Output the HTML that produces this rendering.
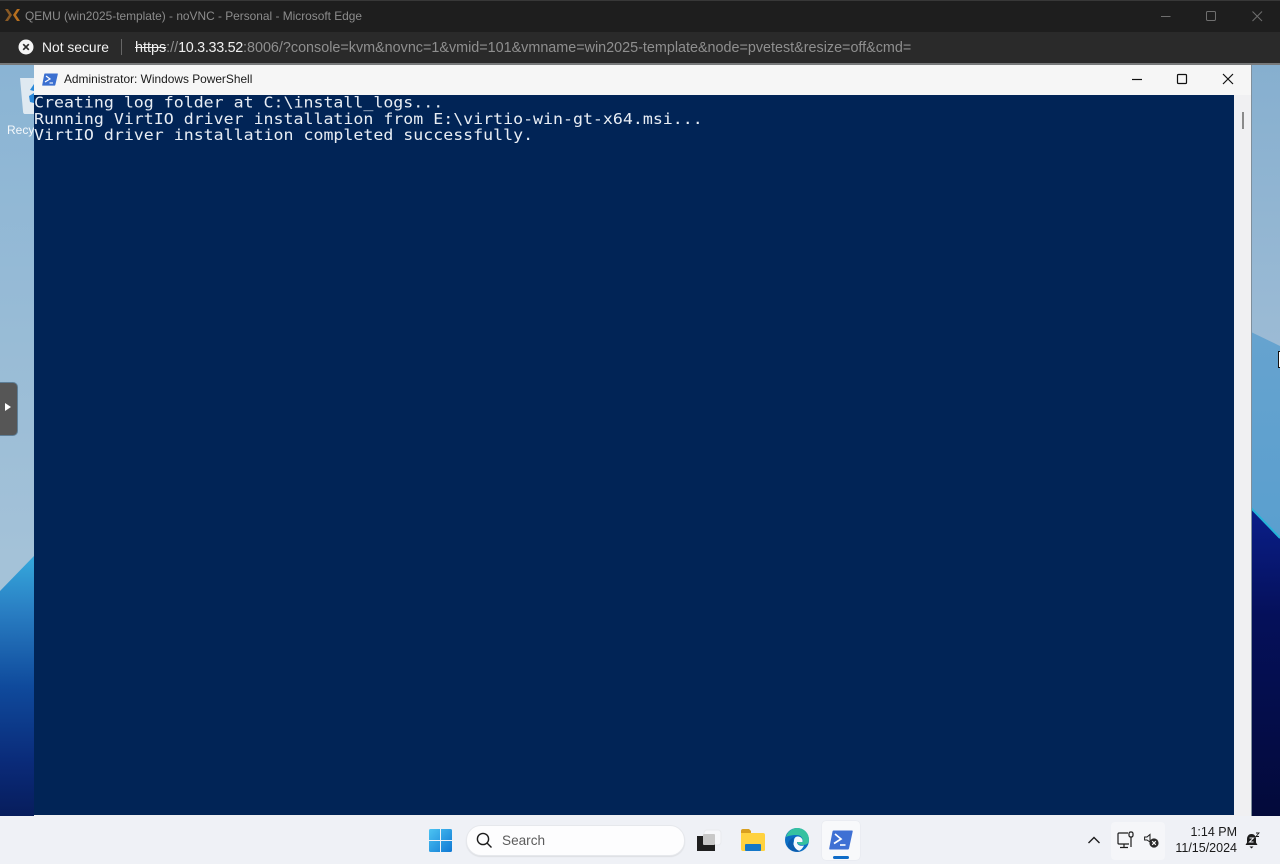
<!DOCTYPE html>
<html lang="en">
<head>
<meta charset="utf-8">
<title>QEMU (win2025-template) - noVNC - Personal - Microsoft Edge</title>
<style>
html,body{margin:0;padding:0;width:1280px;height:864px;overflow:hidden;background:#8fb5d2}
body{position:relative;font-family:"Liberation Sans",sans-serif}
.a{position:absolute;white-space:pre}
svg{position:absolute;display:block}
</style>
</head>
<body>

<!-- wallpaper -->
<svg style="left:0;top:64px" width="1280" height="752" viewBox="0 64 1280 752">
<defs>
<linearGradient id="wl" x1="0" y1="557" x2="0" y2="816" gradientUnits="userSpaceOnUse">
<stop offset="0" stop-color="#35a8dc"/><stop offset=".2" stop-color="#2a80c4"/><stop offset=".5" stop-color="#0f4a9c"/><stop offset=".8" stop-color="#0a2a78"/><stop offset="1" stop-color="#071d5c"/>
</linearGradient>
<linearGradient id="wt" x1="0" y1="64" x2="0" y2="560" gradientUnits="userSpaceOnUse">
<stop offset="0" stop-color="#8ab4d4"/><stop offset="1" stop-color="#a4c2d8"/>
</linearGradient>
<linearGradient id="wtr" x1="0" y1="64" x2="0" y2="350" gradientUnits="userSpaceOnUse">
<stop offset="0" stop-color="#86afcf"/><stop offset="1" stop-color="#9cbbd5"/>
</linearGradient>
<linearGradient id="wr" x1="0" y1="332" x2="0" y2="540" gradientUnits="userSpaceOnUse">
<stop offset="0" stop-color="#66a3cf"/><stop offset="1" stop-color="#5a9fcf"/>
</linearGradient>
<linearGradient id="wd" x1="0" y1="508" x2="0" y2="816" gradientUnits="userSpaceOnUse">
<stop offset="0" stop-color="#0a1f8a"/><stop offset=".35" stop-color="#05105a"/><stop offset="1" stop-color="#030a3a"/>
</linearGradient>
</defs>
<rect x="0" y="64" width="1280" height="752" fill="url(#wt)"/>
<path d="M0 591 L34 556 V816 H0 Z" fill="url(#wl)"/>
<rect x="1251" y="64" width="29" height="290" fill="url(#wtr)"/>
<path d="M1251 332 L1280 346 V540 L1251 508 Z" fill="url(#wr)"/>
<path d="M1251 508 L1280 538 V816 H1251 Z" fill="url(#wd)"/>
<path d="M1251 508 L1280 538" stroke="#25b4d8" stroke-width="2" fill="none"/>
</svg>

<!-- recycle bin peek -->
<svg style="left:18px;top:76px" width="16" height="40" viewBox="0 0 16 40">
<path d="M2 2 H16 V38 H7 Q5 38 5 35 Z" fill="#dfe9f1"/>
<path d="M16 8 L12 14 L16 15 Z M16 17 L11 20 L12 26 L16 27 Z" fill="#2b88d8"/>
</svg>
<div class="a" style="left:7px;top:123px;font-size:12px;line-height:14px;color:#f4f8fb;width:27px;overflow:hidden">Recycle</div>

<!-- Edge title bar -->
<div class="a" style="left:0;top:0;width:1280px;height:32px;background:#1e1e1e"></div>
<div class="a" style="left:0;top:0;width:1280px;height:1px;background:#383838"></div>
<svg style="left:4px;top:8px" width="17" height="14" viewBox="0 0 17 14">
<path d="M1 1 H4 L8 7 L4 13 H1 L5 7 Z" fill="#8a5a25"/>
<path d="M16 1 H13 L9 7 L13 13 H16 L12 7 Z" fill="#b8701f"/>
</svg>
<div class="a" style="left:25px;top:8px;font-size:11.9px;line-height:16px;color:#8c8c8c">QEMU (win2025-template) - noVNC - Personal - Microsoft Edge</div>
<svg style="left:1150px;top:6px" width="125" height="20" viewBox="0 0 125 20" fill="none" stroke="#6f6f6f" stroke-width="1">
<path d="M11 10.5 H20.5"/>
<rect x="56.5" y="5.5" width="9" height="9" rx="1.2"/>
<path d="M102.5 5.5 L112 15 M112 5.5 L102.5 15"/>
</svg>

<!-- Edge address bar -->
<div class="a" style="left:0;top:32px;width:1280px;height:32px;background:#2a2a2a"></div>
<div class="a" style="left:0;top:63px;width:1280px;height:2px;background:#77797a"></div>
<svg style="left:18px;top:39px" width="16" height="16" viewBox="0 0 16 16">
<circle cx="8" cy="8" r="7.5" fill="#f5f5f5"/>
<path d="M5.2 5.2 L10.8 10.8 M10.8 5.2 L5.2 10.8" stroke="#2a2a2a" stroke-width="1.7"/>
</svg>
<div class="a" style="left:42px;top:39px;font-size:13.85px;line-height:17px;color:#f2f2f2">Not secure</div>
<div class="a" style="left:121px;top:39px;width:1px;height:16px;background:#666"></div>
<div class="a" style="left:135px;top:40px;font-size:14.37px;line-height:16px;color:#8f8f8f"><span style="color:#efefef;text-decoration:line-through">https</span>://<span style="color:#efefef;letter-spacing:-.3px">10.3.33.52</span>:8006/?console=kvm&amp;novnc=1&amp;vmid=101&amp;vmname=win2025-template&amp;node=pvetest&amp;resize=off&amp;cmd=</div>

<!-- PowerShell window -->
<div class="a" style="left:34px;top:65px;width:1217px;height:751px;background:#f0f0f2"></div>
<div class="a" style="left:1251px;top:65px;width:1px;height:751px;background:#7f8f9c"></div>
<div class="a" style="left:34px;top:65px;width:1217px;height:30px;background:#f6f6f6"></div>
<svg style="left:42px;top:73px" width="16" height="13" viewBox="0 0 16 13">
<path d="M3 0.5 H15.5 Q16 0.5 15.8 1.2 L13.3 12 Q13.1 12.6 12.5 12.6 H0.7 Q0 12.6 0.2 12 L2.3 1 Q2.4 0.5 3 0.5 Z" fill="#3b6fd0"/>
<path d="M4 3 L8 6 L3 9" stroke="#fff" stroke-width="1.2" fill="none"/>
<path d="M7.5 10 H11" stroke="#fff" stroke-width="1.1"/>
</svg>
<div class="a" style="left:64px;top:72px;font-size:11.9px;line-height:15px;color:#1a1a1a">Administrator: Windows PowerShell</div>
<svg style="left:1125px;top:70px" width="115" height="18" viewBox="0 0 115 18" fill="none" stroke="#111" stroke-width="1.2">
<path d="M7 9.5 H17"/>
<rect x="52.5" y="4.5" width="9" height="9" rx="1"/>
<path d="M98 4 L108 14 M108 4 L98 14"/>
</svg>
<div class="a" style="left:34px;top:95px;width:1200px;height:720px;background:#012456"></div>
<div class="a" style="left:34px;top:95px;font-family:'DejaVu Sans Mono','Liberation Mono',monospace;font-size:16.58px;line-height:17.78px;color:#e8edf4;transform:scaleY(.9);transform-origin:0 0">Creating log folder at C:\install_logs...
Running VirtIO driver installation from E:\virtio-win-gt-x64.msi...
VirtIO driver installation completed successfully.</div>
<div class="a" style="left:1242px;top:112px;width:2px;height:17px;background:#8a8a8a"></div>

<!-- noVNC control handle -->
<div class="a" style="left:0;top:382px;width:17px;height:52px;background:#565656;border-radius:0 5px 5px 0;border:1px solid #5e7e96;border-left:0"></div>
<svg style="left:5px;top:403px" width="6" height="8" viewBox="0 0 6 8"><path d="M0 0 L6 4 L0 8 Z" fill="#fff"/></svg>

<!-- mouse cursor -->
<div class="a" style="left:1278px;top:351px;width:2px;height:15px;border:1px solid #111;border-right:0;background:#fff"></div>

<!-- taskbar -->
<div class="a" style="left:0;top:816px;width:1280px;height:48px;background:#eff1f6"></div>

<svg style="left:429px;top:829px" width="23" height="23" viewBox="0 0 23 23">
<defs><linearGradient id="wn" x1="0" y1="0" x2="1" y2="1"><stop offset="0" stop-color="#4cc4f2"/><stop offset="1" stop-color="#0f78d4"/></linearGradient></defs>
<path d="M0 1.5 Q0 0 1.5 0 H11 V11 H0 Z M12 0 H21.5 Q23 0 23 1.5 V11 H12 Z M0 12 H11 V23 H1.5 Q0 23 0 21.5 Z M12 12 H23 V21.5 Q23 23 21.5 23 H12 Z" fill="url(#wn)"/>
</svg>

<div class="a" style="left:466px;top:825px;width:217px;height:29px;border-radius:15px;background:#fdfdfe;border:1px solid #e6e8ec;box-shadow:0 1px 1px #dcdee2"></div>
<svg style="left:476px;top:832px" width="17" height="17" viewBox="0 0 17 17" fill="none" stroke="#1c1c1c" stroke-width="1.4">
<circle cx="7" cy="7" r="5.6"/><path d="M11 11 L15.5 15.5"/>
</svg>
<div class="a" style="left:502px;top:832px;font-size:13.6px;line-height:17px;color:#5c5c5c">Search</div>

<svg style="left:697px;top:829px" width="26" height="23" viewBox="0 0 26 23">
<rect x="7" y="1" width="17" height="15" rx="3" fill="#f6f7fa" stroke="#e8eaee"/>
<rect x="0" y="7" width="18" height="15" fill="#1f1f1f"/>
<rect x="6" y="5" width="12" height="11" rx="1" fill="#c8c8c8"/>
</svg>

<svg style="left:741px;top:829px" width="24" height="22" viewBox="0 0 24 22">
<path d="M0 2 Q0 0 2 0 H8 L10 2 V6 H0 Z" fill="#d9a020"/>
<path d="M0 4 H22 Q24 4 24 6 V21 Q24 22 22 22 H2 Q0 22 0 20 Z" fill="#ffd23f"/>
<rect x="4" y="15" width="16" height="7" rx="1" fill="#1577c8"/>
</svg>

<svg style="left:785px;top:828px" width="24" height="24" viewBox="0 0 24 24">
<circle cx="12" cy="12" r="12" fill="#0c6fc4"/>
<path d="M1 9 C3 2 9 0 12 0 C19 0 24 5 24 12 C24 16 21 17 17 17 C14 17 12 15.5 12.5 14 H18 C18 10 16 7 11.5 7 C7 7 3 8 1 9 Z" fill="#35c1a0"/>
<path d="M9 13 C9 8 13 8 15 9 C17 10 18 12 17.5 14 H12 C12 17 15 18.5 19 17.5 C17 22 13 24 11 23.5 C8 22 8 17 9 13 Z" fill="#fff" opacity=".96"/>
<path d="M8 13 C8 18 11 23 16 23 C11 25 5 23 2.5 18 C3 13 6 10 10 9 C9 10 8 11 8 13 Z" fill="#0b5cae"/>
</svg>

<div class="a" style="left:822px;top:821px;width:38px;height:39px;border-radius:4px;background:#f8f9fb;box-shadow:0 0 1px #d4d8de"></div>
<svg style="left:829px;top:830px" width="24" height="20" viewBox="0 0 24 20">
<path d="M4.5 0.5 H23 Q24 0.5 23.7 1.5 L20 18.5 Q19.8 19.5 18.8 19.5 H1 Q0 19.5 0.2 18.5 L3.5 1.5 Q3.7 0.5 4.5 0.5 Z" fill="#3f70d4"/>
<path d="M6 4 L12 9 L5 13.5" stroke="#fff" stroke-width="1.7" fill="none"/>
<path d="M11 15 H16.5" stroke="#fff" stroke-width="1.6"/>
</svg>
<div class="a" style="left:833px;top:856px;width:16px;height:3px;border-radius:2px;background:#0f6cc8"></div>

<svg style="left:1087px;top:835px" width="14" height="10" viewBox="0 0 14 10" fill="none" stroke="#1c1c1c" stroke-width="1.4"><path d="M1.5 8 L7 2.5 L12.5 8"/></svg>

<div class="a" style="left:1111px;top:822px;width:54px;height:38px;border-radius:4px;background:#f5f6f9"></div>
<svg style="left:1117px;top:831px" width="18" height="18" viewBox="0 0 18 18" fill="none" stroke="#1c1c1c" stroke-width="1.2">
<path d="M11 2 H2 Q1 2 1 3 V12 Q1 13 2 13 H12"/>
<path d="M7 13 V16.5 M3 16.5 H11"/>
<rect x="12" y="1" width="4" height="5" rx="1.6"/>
<path d="M14 6 V16"/>
</svg>
<svg style="left:1144px;top:833px" width="15" height="15" viewBox="0 0 15 15">
<path d="M0.6 4 H3 L6 1.5 V9 L3 7 H0.6 Z" fill="none" stroke="#1c1c1c" stroke-width="1"/>
<circle cx="10" cy="10" r="4.6" fill="#2a2a2a"/>
<path d="M8.2 8.2 L11.8 11.8 M11.8 8.2 L8.2 11.8" stroke="#fff" stroke-width="1.1"/>
</svg>

<div class="a" style="left:1160px;top:825px;width:77px;text-align:right;font-size:12.5px;line-height:15px;color:#1a1a1a">1:14 PM</div>
<div class="a" style="left:1160px;top:841px;width:77px;text-align:right;font-size:12.5px;line-height:15px;color:#1a1a1a">11/15/2024</div>

<svg style="left:1245px;top:832px" width="15" height="17" viewBox="0 0 15 17">
<path d="M6.5 2 C3.5 2 2 4.5 2 7 V10.5 L0.5 13 H12.5 L11 10.5 V7 C11 4.5 9.5 2 6.5 2 Z" fill="#1c1c1c"/>
<path d="M4.5 14.5 H8.5 L6.5 16.5 Z" fill="#1c1c1c"/>
<path d="M4.5 6 H8.5 L4.5 10 H8.5" stroke="#eff1f6" stroke-width="1" fill="none"/>
<path d="M11 1 H14 L11 4.5 H14" stroke="#1c1c1c" stroke-width=".9" fill="none"/>
</svg>

</body>
</html>
